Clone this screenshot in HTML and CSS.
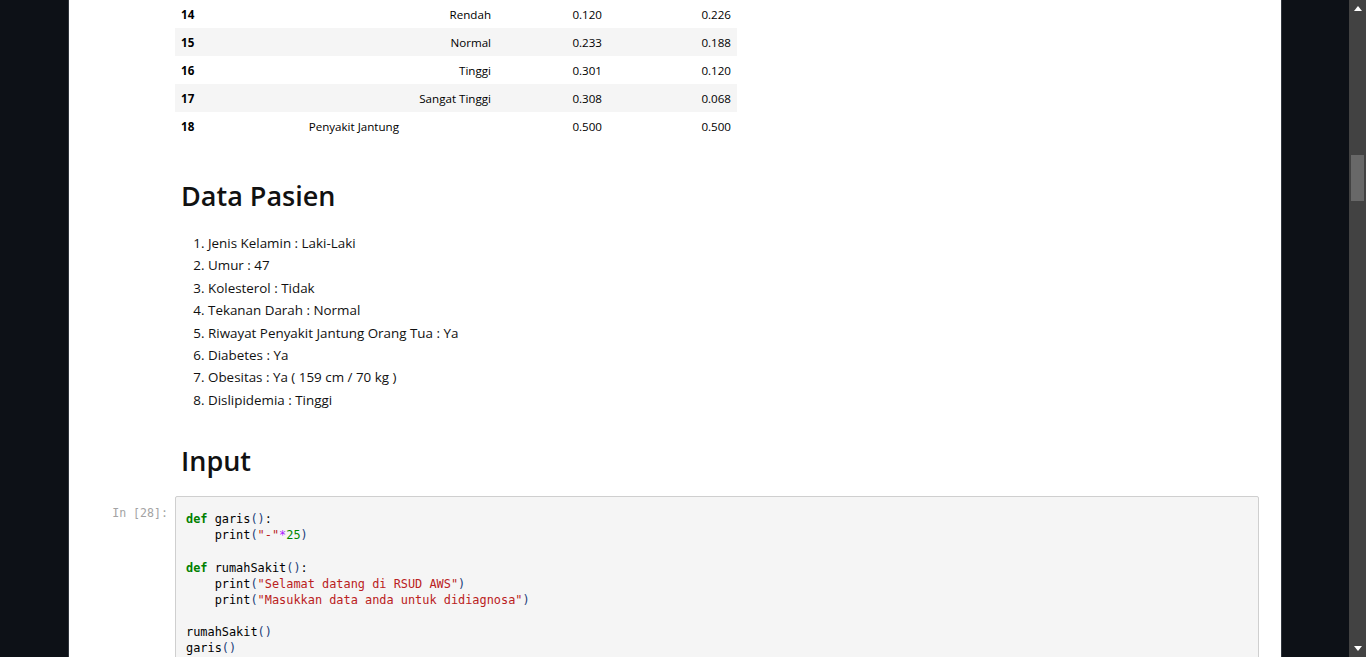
FILE: index.html
```html
<!DOCTYPE html>
<html>
<head>
<meta charset="utf-8">
<link rel="stylesheet" href="styles.css">
</head>
<body>
<div class="viewport">
  <div class="notebook">
    <div class="cell output-cell">
      <div class="prompt"></div>
      <div class="output">
        <table class="dataframe">
          <colgroup>
            <col class="c-idx"><col class="c-a"><col class="c-b"><col class="c-c"><col class="c-d">
          </colgroup>
          <tbody>
            <tr><th>14</th><td></td><td>Rendah</td><td>0.120</td><td>0.226</td></tr>
            <tr><th>15</th><td></td><td>Normal</td><td>0.233</td><td>0.188</td></tr>
            <tr><th>16</th><td></td><td>Tinggi</td><td>0.301</td><td>0.120</td></tr>
            <tr><th>17</th><td></td><td>Sangat Tinggi</td><td>0.308</td><td>0.068</td></tr>
            <tr><th>18</th><td>Penyakit Jantung</td><td></td><td>0.500</td><td>0.500</td></tr>
          </tbody>
        </table>
      </div>
    </div>

    <div class="cell md-cell">
      <div class="prompt"></div>
      <div class="md">
        <h2 class="h-data">Data Pasien</h2>
        <ol>
          <li>Jenis Kelamin : Laki-Laki</li>
          <li>Umur : 47</li>
          <li>Kolesterol : Tidak</li>
          <li>Tekanan Darah : Normal</li>
          <li>Riwayat Penyakit Jantung Orang Tua : Ya</li>
          <li>Diabetes : Ya</li>
          <li>Obesitas : Ya ( 159 cm / 70 kg )</li>
          <li>Dislipidemia : Tinggi</li>
        </ol>
      </div>
    </div>

    <div class="cell md-cell">
      <div class="prompt"></div>
      <div class="md">
        <h2 class="h-input">Input</h2>
      </div>
    </div>

    <div class="cell code-cell">
      <div class="prompt in-prompt">In&nbsp;[28]:</div>
      <div class="input-area">
<pre><span class="kw">def</span> garis<span class="br">()</span>:
    print<span class="br">(</span><span class="st">"-"</span><span class="op">*</span><span class="nm">25</span><span class="br">)</span>

<span class="kw">def</span> rumahSakit<span class="br">()</span>:
    print<span class="br">(</span><span class="st">"Selamat datang di RSUD AWS"</span><span class="br">)</span>
    print<span class="br">(</span><span class="st">"Masukkan data anda untuk didiagnosa"</span><span class="br">)</span>

rumahSakit<span class="br">()</span>
garis<span class="br">()</span>
</pre>
      </div>
    </div>
  </div>
</div>
<div class="scrollbar">
  <div class="arrow up"></div>
  <div class="track"><div class="thumb"></div></div>
  <div class="arrow down"></div>
</div>
</body>
</html>
```

FILE: styles.css
```css
html, body {
  margin: 0;
  padding: 0;
  height: 657px;
  overflow: hidden;
}
body {
  background: #0d1117;
  display: flex;
  font-family: "Open Sans", "Noto Sans", sans-serif;
  color: #000;
}
.viewport {
  width: 1349px;
  height: 657px;
  display: flex;
  justify-content: center;
}
.notebook {
  width: 1214px;
  background: #fff;
  border-left: 1px solid #30363d;
  border-right: 1px solid #30363d;
  height: 657px;
  box-sizing: border-box;
  overflow: hidden;
  margin-left: 1px;
}
.cell {
  display: flex;
  align-items: flex-start;
}
.prompt {
  width: 106px;
  flex: none;
  box-sizing: border-box;
  padding-right: 7px;
  text-align: right;
}
.in-prompt {
  font-family: "DejaVu Sans Mono", monospace;
  font-size: 11.6px;
  color: #a3a3a3;
  padding-top: 9px;
  line-height: 16px;
}
/* table */
.dataframe {
  border-collapse: collapse;
  table-layout: fixed;
  width: 562px;
  font-size: 11.6px;
  line-height: 16px;
}
.c-idx { width: 90px; }
.c-a { width: 140px; }
.c-b { width: 92px; }
.c-c { width: 111px; }
.c-d { width: 129px; }
.dataframe th, .dataframe td {
  padding: 7px 6px 5px 6px;
  text-align: right;
  white-space: nowrap;
  color: #000;
}
.dataframe th {
  text-align: left;
  font-weight: 700;
}
.dataframe tr:nth-child(even) {
  background: #f5f5f5;
}
/* markdown */
.md {
  padding-left: 6px;
}
.md h2 {
  margin: 0;
  font-size: 27px;
  font-weight: 600;
  line-height: 36px;
  color: #111;
}
.h-data {
  margin-top: 38px !important;
}
.md ol {
  margin: 18px 0 0 0;
  padding-left: 27px;
  font-size: 13.4px;
  line-height: 22.4px;
  color: #111;
}
.h-input {
  margin-top: 32px !important;
}
/* code */
.code-cell {
  margin-top: 17px;
}
.input-area {
  flex: none;
  width: 1084px;
  box-sizing: border-box;
  background: #f5f5f5;
  border: 1px solid #cfcfcf;
  border-radius: 2px;
  padding: 14px 10px 20px 10px;
}
.input-area pre {
  margin: 0;
  font-family: "DejaVu Sans Mono", monospace;
  font-size: 11.9px;
  line-height: 16.1px;
  color: #000;
}
.kw { color: #008000; font-weight: 700; }
.st { color: #ba2121; }
.op { color: #aa22ff; }
.nm { color: #008800; }
.br { color: #1d3f7a; }
/* scrollbar */
.scrollbar {
  width: 17px;
  height: 657px;
  background: #424242;
  display: flex;
  flex-direction: column;
  align-items: center;
}
.arrow {
  width: 0;
  height: 0;
  flex: none;
}
.arrow.up {
  margin-top: 6px;
  border-left: 4px solid transparent;
  border-right: 4px solid transparent;
  border-bottom: 5px solid #fff;
}
.arrow.down {
  margin-bottom: 6px;
  border-left: 4px solid transparent;
  border-right: 4px solid transparent;
  border-top: 5px solid #fff;
}
.track {
  flex: 1;
  width: 13px;
}
.thumb {
  margin-top: 144px;
  height: 46px;
  background: #686868;
}
```
